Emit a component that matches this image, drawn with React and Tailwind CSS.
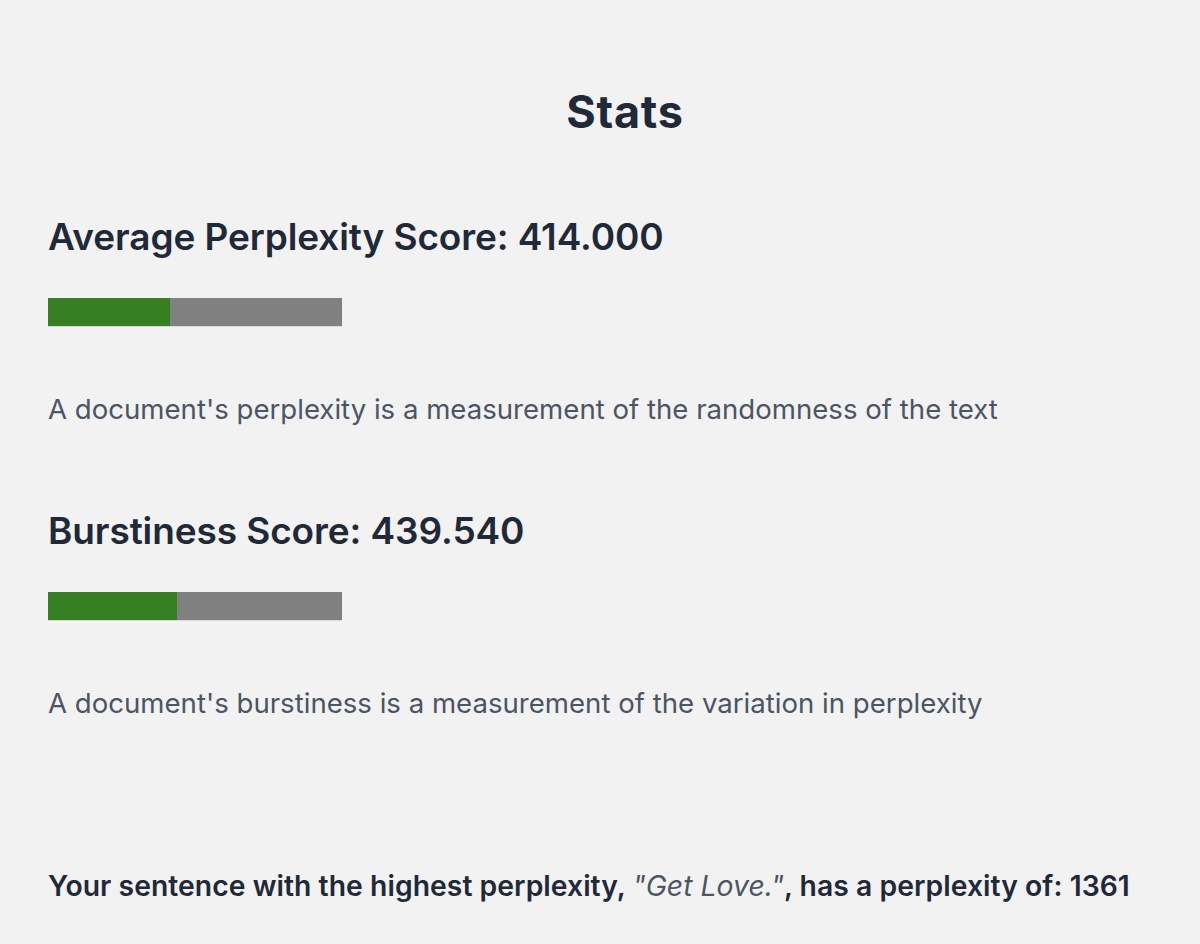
import React from 'react';

const stats = [
    {
        label: 'Average Perplexity Score',
        value: 414.0,
        fill: 122,
        note: "A document's perplexity is a measurement of the randomness of the text",
    },
    {
        label: 'Burstiness Score',
        value: 439.54,
        fill: 129,
        note: "A document's burstiness is a measurement of the variation in perplexity",
    },
];

const ScoreBar = ({ fill }) => (
    <div className="w-[294px] h-[29px] bg-[#808080] flex border-b border-white/70">
        <div className="h-full bg-[#367f22]" style={{ width: `${fill}px` }} />
    </div>
);

const App = () => {
    return (
        <div className="min-h-[944px] bg-[#f2f2f2] text-[#1f2937] px-12 pt-[84px] font-['Inter','Liberation_Sans',sans-serif]">
            <h1 className="text-center text-[45px] leading-[56px] font-bold tracking-[0.8px] pl-[50px]">Stats</h1>

            {stats.map((s, i) => (
                <div key={s.label} className={i === 0 ? 'mt-[75px]' : 'mt-[84px]'}>
                    <h2 className="text-[37px] leading-[44px] font-semibold tracking-[-0.1px]">
                        {s.label}: {s.value.toFixed(3)}
                    </h2>
                    <div className="mt-[39px]">
                        <ScoreBar fill={s.fill} />
                    </div>
                    <p className="mt-[66px] text-[27.6px] leading-[32px] text-[#4b5563]">{s.note}</p>
                </div>
            ))}

            <p className="mt-[151px] text-[28.3px] leading-[32px] font-semibold tracking-[0.05px]">
                Your sentence with the highest perplexity,{' '}
                <span className="italic font-normal text-[#4b5563]">"Get Love."</span>, has a perplexity of: 1361
            </p>
        </div>
    );
};

export default App;
